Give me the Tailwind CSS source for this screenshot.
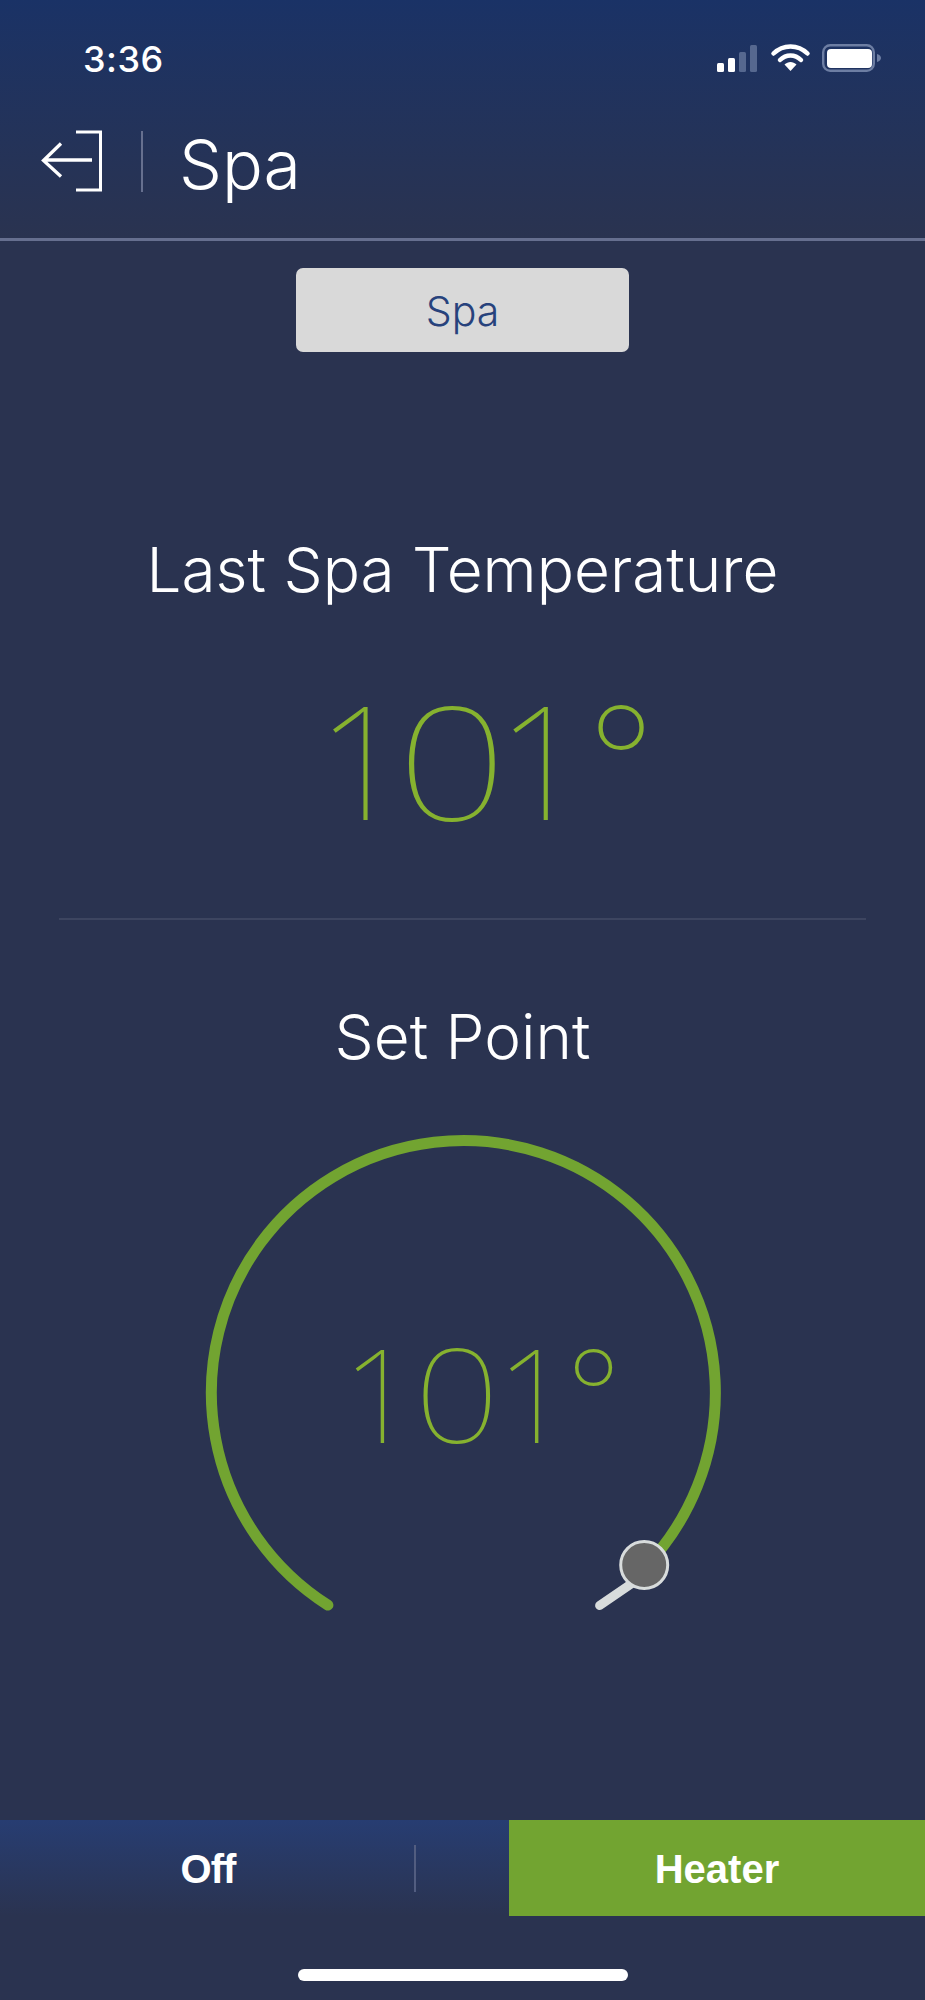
<!DOCTYPE html>
<html>
<head>
<meta charset="utf-8">
<script src="https://cdn.jsdelivr.net/npm/@tailwindcss/browser@4"></script>
</head>
<body class="bg-[#2a3350]">
<div class="w-[925px] h-[2000px] overflow-hidden flex flex-col bg-[#2a3350] text-white font-['Inter','Liberation_Sans',sans-serif]">
  <header class="h-[241px] box-border border-b-[3px] border-[#666f8f] bg-gradient-to-b from-[#1a3266] to-[#2a3350]">
    <div class="h-[116px] flex items-center justify-between pl-[83px] pr-[43px]">
      <span class="pt-[2px] text-[36px] tracking-[0.5px] leading-none font-medium">3:36</span>
      <svg width="165" height="30" viewBox="0 0 165 30" class="block" fill="none">
        <rect x="0" y="20" width="7" height="9" rx="1.5" fill="#fff"/>
        <rect x="11" y="15" width="7" height="14" rx="1.5" fill="#fff"/>
        <rect x="22" y="9" width="7" height="20" rx="1.5" fill="#56688f"/>
        <rect x="33" y="2" width="7" height="27" rx="1.5" fill="#56688f"/>
        <path d="M56.5 10.5 C66 1 81 1 90.5 10.5" stroke="#fff" stroke-width="4.5" stroke-linecap="round"/>
        <path d="M63 17 C69 11 78 11 84 17" stroke="#fff" stroke-width="4.5" stroke-linecap="round"/>
        <path d="M67.5 21.5 C71 18 76 18 79.5 21.5 L73.5 28 Z" fill="#fff"/>
        <rect x="106.2" y="2.2" width="50.6" height="25.6" rx="7" stroke="#6d7ea3" stroke-width="2.4"/>
        <rect x="110" y="6" width="45" height="19" rx="4" fill="#fff"/>
        <path d="M160 11 C163 12 164 13.5 164 15 C164 16.5 163 18 160 19 Z" fill="#6d7ea3"/>
      </svg>
    </div>
    <div class="h-[90px] flex items-center">
      <svg width="62" height="62" viewBox="0 0 62 62" class="ml-[41px]" fill="none" stroke="#fff" stroke-width="3">
        <path d="M61 2 H35 M59.5 1 V61 M61 60 H35" />
        <path d="M51 30 H3 M20 13.5 L2.5 30.5 L20 46.5" stroke-width="3.3"/>
      </svg>
      <div class="w-[2px] h-[61px] bg-[#67708f] ml-[38px]"></div>
      <span class="ml-[36px] pt-[5px] text-[68px] leading-none font-light">Spa</span>
    </div>
  </header>

  <div class="mt-[27px] mx-auto w-[333px] h-[84px] pt-[3px] rounded-[7px] bg-[#d9d9d9] flex items-center justify-center text-[41px] font-light text-[#27427c]">Spa</div>

  <div class="mt-[178px] h-[80px] flex items-center justify-center text-[62px] font-light leading-none">Last Spa Temperature</div>

  <div class="mt-[75px] h-[160px] pb-[12px] pl-[47px] flex items-center justify-center text-[158px] leading-none font-thin text-[#86b22f] font-['Noto_Sans',sans-serif]"><span>1<span class="inline-block scale-x-[1.22]">0</span>1°</span></div>

  <div class="mt-[73px] mx-[59px] h-[2px] bg-[#3d4560]"></div>

  <div class="mt-[77px] h-[80px] flex items-center justify-center text-[62px] font-light leading-none">Set Point</div>

  <div class="mt-[43px] mx-auto w-[520px] h-[520px] relative">
    <svg width="520" height="520" viewBox="0 0 520 520" fill="none" class="block">
      <path d="M124.9 485.1 A252 252 0 1 1 441.2 448.1" stroke="#72a431" stroke-width="11" stroke-linecap="round"/>
      <path d="M396.6 485.5 L441.2 455" stroke="#d8dcdc" stroke-width="9" stroke-linecap="round"/>
      <circle cx="441.2" cy="445" r="23.5" fill="#666666" stroke="#d8dcdc" stroke-width="3"/>
    </svg>
    <div class="absolute left-[137px] top-[208px] w-[285px] h-[130px] flex items-center justify-center text-[130px] leading-none font-thin text-[#86b22f] font-['Noto_Sans',sans-serif]"><span><span class="tracking-[3px]">1<span class="inline-block scale-x-[1.15]">0</span></span>1<span class="-ml-[5px]">°</span></span></div>
  </div>

  <div class="mt-[180px] h-[96px] flex">
    <div class="w-[509px] bg-gradient-to-b from-[#273d72] to-[#2a3350] flex items-center relative">
      <span class="w-[416px] pt-[2px] text-center text-[40px] tracking-[-1px] font-bold leading-none font-['Liberation_Sans',sans-serif]">Off</span>
      <div class="absolute left-[414px] top-[25px] w-[2px] h-[47px] bg-[#525d80]"></div>
    </div>
    <div class="flex-1 pt-[2px] bg-[#72a431] flex items-center justify-center text-[40px] font-bold leading-none font-['Liberation_Sans',sans-serif]">Heater</div>
  </div>

  <div class="mt-[53px] mx-auto w-[330px] h-[12px] rounded-full bg-white"></div>
</div>
</body>
</html>
